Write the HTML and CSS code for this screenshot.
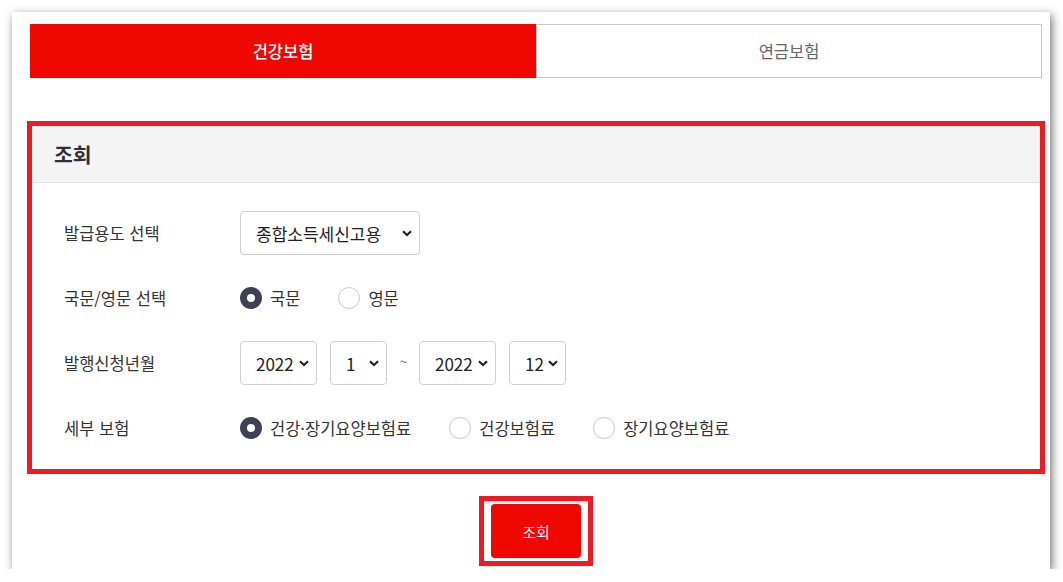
FILE: index.html
```html
<!DOCTYPE html>
<html lang="ko">
<head>
<meta charset="utf-8">
<title>보험료 납부확인서 조회</title>
<link rel="stylesheet" href="styles.css">
</head>
<body>
<div class="panel">
  <div class="tabs">
    <div class="tab active">건강보험</div>
    <div class="tab">연금보험</div>
  </div>

  <section class="query">
    <h2 class="query-title">조회</h2>
    <div class="query-body">
      <div class="row">
        <div class="label">발급용도 선택</div>
        <div class="controls">
          <div class="select sel-purpose"><span>종합소득세신고용</span>
            <svg class="chev" width="10" height="7" viewBox="0 0 10 7"><path d="M1 1.2l4 3.8L9 1.2" fill="none" stroke="#222" stroke-width="2.2"/></svg>
          </div>
        </div>
      </div>

      <div class="row">
        <div class="label">국문/영문 선택</div>
        <div class="controls options">
          <label class="opt"><span class="radio checked"></span>국문</label>
          <label class="opt"><span class="radio"></span>영문</label>
        </div>
      </div>

      <div class="row">
        <div class="label">발행신청년월</div>
        <div class="controls dates">
          <div class="select sel-year"><span>2022</span>
            <svg class="chev" width="10" height="7" viewBox="0 0 10 7"><path d="M1 1.2l4 3.8L9 1.2" fill="none" stroke="#222" stroke-width="2.2"/></svg>
          </div>
          <div class="select sel-month"><span>1</span>
            <svg class="chev" width="10" height="7" viewBox="0 0 10 7"><path d="M1 1.2l4 3.8L9 1.2" fill="none" stroke="#222" stroke-width="2.2"/></svg>
          </div>
          <span class="tilde">~</span>
          <div class="select sel-year"><span>2022</span>
            <svg class="chev" width="10" height="7" viewBox="0 0 10 7"><path d="M1 1.2l4 3.8L9 1.2" fill="none" stroke="#222" stroke-width="2.2"/></svg>
          </div>
          <div class="select sel-month"><span>12</span>
            <svg class="chev" width="10" height="7" viewBox="0 0 10 7"><path d="M1 1.2l4 3.8L9 1.2" fill="none" stroke="#222" stroke-width="2.2"/></svg>
          </div>
        </div>
      </div>

      <div class="row">
        <div class="label">세부 보험</div>
        <div class="controls options">
          <label class="opt"><span class="radio checked"></span>건강·장기요양보험료</label>
          <label class="opt"><span class="radio"></span>건강보험료</label>
          <label class="opt"><span class="radio"></span>장기요양보험료</label>
        </div>
      </div>
    </div>
  </section>

  <div class="actions">
    <div class="btn-frame">
      <button class="btn" type="button">조회</button>
    </div>
  </div>
</div>
</body>
</html>
```

FILE: styles.css
```css
* { box-sizing: border-box; }

html, body {
  margin: 0;
  padding: 0;
  background: #ffffff;
}

body {
  font-family: "Noto Sans CJK KR", "Noto Sans", sans-serif;
  color: #333;
}

.panel {
  margin: 12px 0 0 12px;
  width: 1038px;
  height: 557px;
  background: #fff;
  box-shadow: 2px 3px 9px rgba(0, 0, 0, 0.55);
  padding: 12px 5px 0 15px;
}

.tabs {
  display: flex;
  margin: 0 3px;
  height: 54px;
}

.tab {
  flex: 1;
  display: flex;
  align-items: center;
  justify-content: center;
  font-size: 16.5px;
  color: #666;
  border: 1px solid #c6c6cc;
  background: #fff;
}

.tab.active {
  background: #ee0800;
  border-color: #ee0800;
  color: #fff;
  font-weight: 500;
}

.query {
  margin-top: 43px;
  border: 5px solid #ed1c24;
}

.query-title {
  margin: 0;
  height: 57px;
  display: flex;
  align-items: center;
  padding-left: 22px;
  background: #f4f4f4;
  border-bottom: 1px solid #e2e2e2;
  font-size: 20.5px;
  font-weight: 700;
  color: #2f2f3a;
}

.query-body {
  padding: 28px 32px 19px;
  display: flex;
  flex-direction: column;
  gap: 21px;
}

.row {
  display: flex;
  align-items: center;
  height: 44px;
}

.label {
  width: 176px;
  font-size: 16.5px;
  color: #333;
}

.controls {
  display: flex;
  align-items: center;
}

.select {
  height: 44px;
  display: flex;
  align-items: center;
  justify-content: space-between;
  padding: 0 7px 0 15px;
  border: 1px solid #cfcfd4;
  border-radius: 4px;
  font-size: 17px;
  color: #222;
  background: #fff;
}

.chev { display: block; flex: none; }

.sel-purpose { width: 180px; }
.sel-year { width: 77px; }
.sel-month { width: 57px; }

.dates { gap: 13px; }

.tilde {
  font-size: 13px;
  color: #666;
  width: 6px;
  text-align: center;
  margin-top: -4px;
}

.options { gap: 38px; }

.opt {
  display: flex;
  align-items: center;
  gap: 8px;
  font-size: 16.5px;
  color: #333;
}

.radio {
  width: 22px;
  height: 22px;
  border-radius: 50%;
  border: 1px solid #c8c8cc;
  background: #fff;
  flex: none;
}

.radio.checked {
  border: 7px solid #3e4155;
}

.actions {
  display: flex;
  justify-content: center;
  margin-top: 22px;
}

.btn-frame {
  border: 5px solid #ed1c24;
  padding: 3px 7px;
}

.btn {
  display: block;
  width: 90px;
  height: 54px;
  border: none;
  border-radius: 4px;
  background: #ee0800;
  color: #fff;
  font-family: "Noto Sans CJK KR", "Noto Sans", sans-serif;
  font-size: 15px;
}
```
